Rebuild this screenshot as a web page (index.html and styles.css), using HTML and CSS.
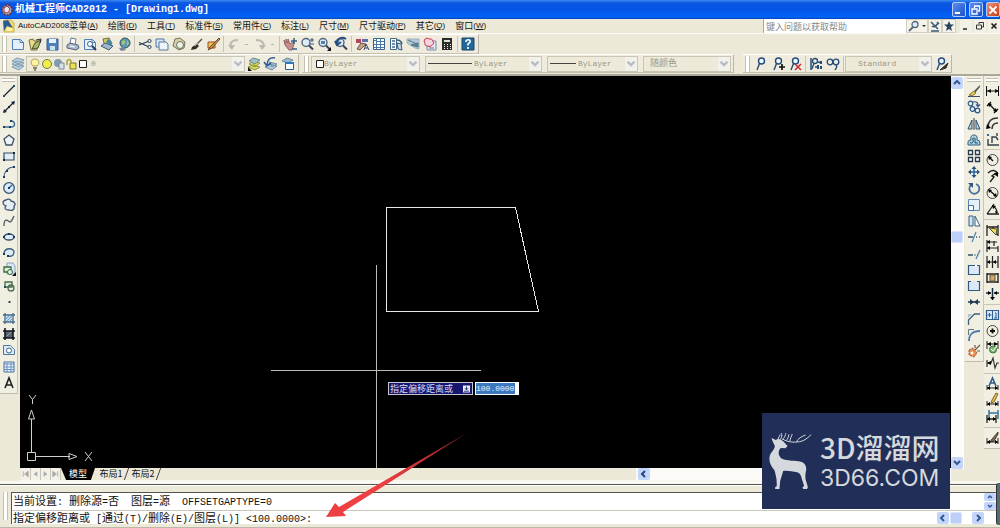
FILE: index.html
```html
<!DOCTYPE html>
<html lang="zh-CN">
<head>
<meta charset="utf-8">
<title>机械工程师CAD2012 - [Drawing1.dwg]</title>
<link rel="stylesheet" href="styles.css">
</head>
<body>
<svg class="sprite" aria-hidden="true">
  <defs>
    <linearGradient id="fade" x1="0" y1="1" x2="1" y2="0"><stop offset="0.400" stop-color="#ee3f42"/><stop offset="1" stop-color="#8c2024"/></linearGradient>
    <g id="page"><path d="M2.500 3.500h8l3 3v7h-11z" fill="#e3effd" stroke="#4f7fb4"/><path d="M10 3.500v3h3.500" fill="none" stroke="#4f7fb4"/></g>
    <g id="lens"><circle cx="7" cy="6.500" r="4" fill="#dcecf8" stroke="#56687c" stroke-width="1.400"/><path d="M10 9.500l4 4" stroke="#39465a" stroke-width="2"/></g>
    <g id="man" fill="none" stroke="#234b78" stroke-width="1.400"><circle cx="8.500" cy="5" r="3" fill="#eef5fb"/><path d="M6.500 7.500L4 14"/></g>
    <g id="ends" fill="#111"><path d="M2 8l4-2v4zM14 8l-4-2v4z"/><path d="M2 8h12M1.500 3v10M13.500 3v10" stroke="#111" fill="none"/></g>
    <g id="chev"><path d="M2 4l3 3 3-3" fill="none" stroke="#b9bdc4" stroke-width="2"/></g>
  </defs>
  <symbol id="new" viewBox="0 0 16 16"><use href="#page"/></symbol>
  <symbol id="open" viewBox="0 0 16 16"><path d="M2 4l4-1 1 2h5l-2 9H4z" fill="#e9d98b" stroke="#77713d"/><path d="M5 13l3-6 6-3-3 8z" fill="#aeb869" stroke="#455238"/><path d="M9 4l5-1-1 4" fill="none" stroke="#333"/></symbol>
  <symbol id="save" viewBox="0 0 16 16"><path d="M3 3h11v11H3z" fill="#4f81ba" stroke="#365f93"/><path d="M5 3h7v4H5z" fill="#e9f3fc"/><path d="M6 10h5v4H6z" fill="#cfe0ef"/></symbol>
  <symbol id="plot" viewBox="0 0 16 16"><path d="M5 8l1-6 5 1-1 6" fill="#fff" stroke="#667c98"/><path d="M2 9l3-2 8 2 1 3-3 2-9-2z" fill="#a8b7cb" stroke="#52657f"/><path d="M5 10l5 1" stroke="#fff"/></symbol>
  <symbol id="preview" viewBox="0 0 16 16"><use href="#page"/><circle cx="8" cy="8" r="2.500" fill="#fff" stroke="#39648c"/><path d="M10 10l4 4" stroke="#24415f" stroke-width="2"/></symbol>
  <symbol id="publish" viewBox="0 0 16 16"><path d="M4 3l6-1 3 6-7 3z" fill="#e5ca59" stroke="#686b4c"/><path d="M2 10l4-3 8 3-4 4z" fill="#9eb7cf" stroke="#3f5978"/><path d="M9 3l4 3-2 3-4-3z" fill="#4386aa"/></symbol>
  <symbol id="globe" viewBox="0 0 16 16"><circle cx="9" cy="7" r="5" fill="#5c9aad" stroke="#31536c"/><path d="M6 5c2-2 4 0 3 2s-2 2-3 1zM11 4l2 3-2 3" fill="#a8c47e"/><path d="M3 12l5-1 2 3-5 1z" fill="#70879b"/></symbol>
  <symbol id="cut" viewBox="0 0 16 16"><path d="M2 6.500l9 4M2 9l9-3.500" stroke="#28445f" stroke-width="1.300"/><circle cx="12.500" cy="5" r="1.600" fill="none" stroke="#28445f"/><circle cx="12.500" cy="11" r="1.600" fill="none" stroke="#28445f"/></symbol>
  <symbol id="copy" viewBox="0 0 16 16"><path d="M2 3h8v8H2z" fill="#d7e7f8" stroke="#5277a1"/><path d="M5 6h7l2 2v6H5z" fill="#eef5fd" stroke="#5277a1"/></symbol>
  <symbol id="paste" viewBox="0 0 16 16"><path d="M4 3l5-1 5 4-1 6-5 2-6-4z" fill="#d5cfae" stroke="#777250"/><circle cx="9" cy="9" r="3.500" fill="#edf3e6" stroke="#68735f"/></symbol>
  <symbol id="brush" viewBox="0 0 16 16"><path d="M14 3L8 9" stroke="#55524a" stroke-width="1.500"/><path d="M9 8l-5 3-1 3 5-1 3-3z" fill="#33312b"/><path d="M7 10l3-3" stroke="#c3a56d"/></symbol>
  <symbol id="block" viewBox="0 0 16 16"><path d="M3 6h7v6H3z" fill="#e4c64b" stroke="#a2482d"/><path d="M14 2L5 11l-2 3 4-2 8-9z" fill="#d7984e" stroke="#66442d"/></symbol>
  <symbol id="undo" viewBox="0 0 16 16"><path d="M5 12C3 7 6 4 12 4" fill="none" stroke="#bcbaae" stroke-width="2"/><path d="M2 9l4 5 3-5z" fill="#bcbaae"/></symbol>
  <symbol id="redo" viewBox="0 0 16 16"><path d="M11 12c2-5-1-8-7-8" fill="none" stroke="#bcbaae" stroke-width="2"/><path d="M14 9l-4 5-3-5z" fill="#bcbaae"/></symbol>
  <symbol id="pan" viewBox="0 0 16 16"><path d="M2 4l2 3 0-4 2 4V3l2 5 3-2 1 2-2 6H7L3 9z" fill="#c78f8a" stroke="#8d646b"/><path d="M12 2v6M9 5h6M10 13h5" stroke="#365d85" stroke-width="1.500"/></symbol>
  <symbol id="zoom" viewBox="0 0 16 16"><use href="#lens"/><path d="M11 4h4M13 2v4M11 8h4" stroke="#355981"/></symbol>
  <symbol id="zoomw" viewBox="0 0 16 16"><use href="#lens"/><path d="M5 5h4v3H5z" fill="#5380ac"/><path d="M15 11v4h-4z" fill="#111"/></symbol>
  <symbol id="zoomp" viewBox="0 0 16 16"><use href="#lens"/><path d="M13 3C8 0 5 3 4 7M2 5l2 4 4-3" fill="none" stroke="#244f80" stroke-width="2"/></symbol>
  <symbol id="props" viewBox="0 0 16 16"><path d="M2 3h5v4H2z" fill="#b4465d"/><path d="M8 3h6v3H8z" fill="#5b6eac"/><path d="M3 13l4-6 5 1-6 6z" fill="#c5a079" stroke="#6e5563"/><path d="M10 14l2-6 3 6M11 12h3" fill="none" stroke="#344466"/></symbol>
  <symbol id="center" viewBox="0 0 16 16"><path d="M2.500 2.500h11v11h-11z" fill="#fff" stroke="#39628d"/><path d="M5.500 2v12M9.500 2v12M10 5.500h3M10 8.500h3M10 11.500h3M6 5.500h3M6 8.500h3M6 11.500h3M3 4.500h2M3 8.500h2M3 11.500h2" stroke="#4777a5"/></symbol>
  <symbol id="palette" viewBox="0 0 16 16"><path d="M2.500 2.500h6v11h-6z" fill="#fff" stroke="#41698c"/><path d="M4 5h3M4 8h3M4 11h3" stroke="#41698c" stroke-width="1.500"/><path d="M9 4q4 0 5 4" fill="none" stroke="#375879" stroke-width="1.500"/><path d="M9 7l4 1 1 6-4-1z" fill="#c5d6e5" stroke="#375879"/></symbol>
  <symbol id="sheet" viewBox="0 0 16 16"><path d="M2 3h12v10l-4-1-8-5z" fill="#b4c9d9" stroke="#9bb1bd"/><path d="M3 4l9 4M6 9l7-2v4z" fill="#5b8a84" stroke="#57788a"/></symbol>
  <symbol id="markup" viewBox="0 0 16 16"><path d="M5 5h9v9H5z" fill="#e2e6f0" stroke="#7b89aa"/><path d="M3 3q2-2 4 0 3-1 4 2 2 3-1 4-2 3-4 1-4 0-3-3-2-2 0-4z" fill="#f6d5dc" stroke="#cc3658"/><path d="M7 12h5" stroke="#777"/></symbol>
  <symbol id="calc" viewBox="0 0 16 16"><path d="M3 2h10v12H3z" fill="#2c2b28"/><path d="M5 4h6v2H5z" fill="#dce7d6"/><path d="M5 8.500h1M8 8.500h1M11 8.500h1M5 10.500h1M8 10.500h1M11 10.500h1M5 12.500h1M8 12.500h1M11 12.500h1" stroke="#eee"/></symbol>
  <symbol id="help" viewBox="0 0 16 16"><path d="M2 2h12v12H2z" fill="#21689c" stroke="#164569"/><path d="M6 6c0-3 5-3 4 0L8 8v1.500M8 11v2" fill="none" stroke="#fff" stroke-width="1.700"/></symbol>
  <symbol id="layers" viewBox="0 0 16 16"><path d="M2 11l5-3 7 2-5 4zM2 8l5-3 7 2-5 4zM2 5l5-3 7 2-5 4z" fill="#bcd0df" stroke="#7f9bae"/></symbol>
  <symbol id="bulb" viewBox="0 0 12 14"><path d="M4 9C0 5 3 2 6 2s6 3 2 7z" fill="#fff4a0" stroke="#aaa057"/><path d="M4 11h4M5 13h2" stroke="#686653" stroke-width="1.500"/></symbol>
  <symbol id="sun" viewBox="0 0 12 14"><circle cx="6" cy="7" r="4.500" fill="#f0ee4e" stroke="#777a3e"/></symbol>
  <symbol id="vp" viewBox="0 0 12 14"><circle cx="5" cy="6" r="4" fill="#7e9cad"/><path d="M6 6h5v6H6z" fill="#d9e3e7" stroke="#758e9e"/></symbol>
  <symbol id="lock" viewBox="0 0 12 14"><path d="M5 6h6v6H5z" fill="#ece24c" stroke="#77763a"/><path d="M2 8V4q2-3 4 0v3" fill="none" stroke="#a89f3e" stroke-width="1.500"/></symbol>
  <symbol id="swatch" viewBox="0 0 12 14"><path d="M2.500 3.500h7v7h-7z" fill="#fff" stroke="#222"/></symbol>
  <symbol id="laymgr" viewBox="0 0 16 16"><path d="M2 11l5-2 7 2-5 3zM3 8l4-3 7 2-5 4z" fill="#d7d95a" stroke="#8e953f"/><path d="M3 5l4-3 7 2-5 4z" fill="#a3c0c8" stroke="#6d8b99"/><path d="M2 11v4h4z" fill="#111"/></symbol>
  <symbol id="layprev" viewBox="0 0 16 16"><path d="M2 11l4-3 8 2-5 4zM6 6l8 2-5 3z" fill="#b1c9dc" stroke="#6f8ca1"/><path d="M12 2C7 1 4 4 4 9M1 6l3 4 4-3" fill="none" stroke="#315d96" stroke-width="1.600"/></symbol>
  <symbol id="laystate" viewBox="0 0 16 16"><path d="M2 5l5-3 6 2-5 3z" fill="#9eb9ce" stroke="#6f8ca1"/><path d="M5.500 6.500h8v7h-8z" fill="#f7fbff" stroke="#2d5e91"/><path d="M5 7h9" stroke="#2d77bb" stroke-width="2"/></symbol>
  <symbol id="an1" viewBox="0 0 16 16"><use href="#man"/></symbol>
  <symbol id="an2" viewBox="0 0 16 16"><use href="#man"/><path d="M9 11h6M12 8v6" stroke="#111" stroke-width="1.700"/></symbol>
  <symbol id="an3" viewBox="0 0 16 16"><use href="#man"/><path d="M8 8l6 6M14 8l-6 6" stroke="#c92f35" stroke-width="1.600"/></symbol>
  <symbol id="an4" viewBox="0 0 16 16"><path d="M3 2v12" stroke="#234b78" stroke-width="1.500"/><circle cx="7" cy="5" r="2.500" fill="none" stroke="#234b78" stroke-width="1.300"/><path d="M6 7l-2 6M7 11h3M10 6l4 1" stroke="#234b78" stroke-width="1.300" fill="none"/><path d="M9 9h2v4H9zM12 5h2v3h-2zM12 10h2v3h-2z" fill="#234b78"/></symbol>
  <symbol id="an5" viewBox="0 0 16 16"><g fill="none" stroke="#234b78" stroke-width="1.300"><circle cx="5" cy="6" r="2.800"/><circle cx="11" cy="6" r="2.800"/><path d="M11 9c2 2 0 3-1 5"/></g></symbol>
  <symbol id="an6" viewBox="0 0 16 16"><use href="#man"/><path d="M15 7l-8 7 6-2z" fill="#302f2b" stroke="#302f2b"/></symbol>

  <symbol id="line" viewBox="0 0 16 16"><path d="M3 13L13 3" stroke="#222" stroke-width="1.200"/><path d="M2 12h2v2H2zM12 2h2v2h-2z" fill="#234b78"/></symbol>
  <symbol id="xline" viewBox="0 0 16 16"><path d="M3 13L13 3" stroke="#222" stroke-width="1.200"/><path d="M2 14l1-4 3 3zM14 2l-1 4-3-3zM7 7h2v2H7z" fill="#182c45"/></symbol>
  <symbol id="pline" viewBox="0 0 16 16"><path d="M3 11h8c4-1 3-6-1-6" fill="none" stroke="#427099" stroke-width="1.400"/><path d="M2 10h2v2H2zM8 10h2v2H8zM9 4h2v2H9z" fill="#183b60"/></symbol>
  <symbol id="poly" viewBox="0 0 16 16"><path d="M8 3l5 4-2 6H5L3 7z" fill="#eaf2fa" stroke="#3e5264" stroke-width="1.300"/></symbol>
  <symbol id="rect" viewBox="0 0 16 16"><path d="M3 5h10v7H3z" fill="#e2edf6" stroke="#334b60" stroke-width="1.200"/><path d="M2 11h2v2H2zM12 4h2v2h-2z" fill="#12283f"/></symbol>
  <symbol id="arc" viewBox="0 0 16 16"><path d="M3 13c0-5 4-10 10-10" fill="none" stroke="#44637d" stroke-width="1.200"/><path d="M2 12h2v2H2zM5 6h2v2H5zM12 2h2v2h-2z" fill="#183b60"/></symbol>
  <symbol id="circle" viewBox="0 0 16 16"><circle cx="8" cy="8" r="5.300" fill="#dbeafa" stroke="#35566e" stroke-width="1.300"/><path d="M8 8l3-3" stroke="#2869a3" stroke-width="1.500"/><path d="M7 7h2v2H7z" fill="#183b60"/></symbol>
  <symbol id="cloud" viewBox="0 0 16 16"><path d="M5 3c3-2 5 0 5 1 4 0 5 4 3 5 1 4-2 5-5 4-4 0-5-2-3-4-4-2-4-5 0-6z" fill="#e6edf4" stroke="#40576c" stroke-width="1.300"/></symbol>
  <symbol id="spline" viewBox="0 0 16 16"><path d="M3 13C3 5 6 7 8 8.500S11 7 13 3" fill="none" stroke="#4e5b62" stroke-width="1.300"/></symbol>
  <symbol id="ellipse" viewBox="0 0 16 16"><ellipse cx="8" cy="8" rx="5" ry="3" fill="#e0ecf7" stroke="#314c6a" stroke-width="1.300"/><path d="M2 7h2v2H2zM12 7h2v2h-2zM7 4h2v2H7z" fill="#183b60"/></symbol>
  <symbol id="earc" viewBox="0 0 16 16"><path d="M3 8c1-6 10-5 10-1 0 3-2 5-6 4" fill="#dbe9f5" stroke="#395b7b" stroke-width="1.300"/><path d="M2 8h2v2H2zM6 10h2v2H6z" fill="#203850"/></symbol>
  <symbol id="insert" viewBox="0 0 16 16"><path d="M6 2h6l2 3v8H6z" fill="#dae9f6" stroke="#8ba3bb"/><path d="M3 6h7v5H3z" fill="#e1f0dd" stroke="#39683e" stroke-width="1.300"/><circle cx="9" cy="11" r="2.500" fill="#e1f0dd" stroke="#39683e"/><path d="M15 11v4h-4z" fill="#111"/></symbol>
  <symbol id="mkblock" viewBox="0 0 16 16"><path d="M4 4h7v5H4z" fill="#e5efe1" stroke="#486b48" stroke-width="1.300"/><circle cx="10" cy="10" r="3" fill="none" stroke="#486b48" stroke-width="1.300"/><path d="M3 8h2v2H3z" fill="#234b78"/></symbol>
  <symbol id="point" viewBox="0 0 16 16"><path d="M7.500 7h2v2h-2z" fill="#24435b"/></symbol>
  <symbol id="hatch" viewBox="0 0 16 16"><path d="M4 3v11M12 3v11M2 5h12M2 12h12" stroke="#426b8d" stroke-width="1.300"/><path d="M5 6h6v5H5z" fill="#b9daf1"/><path d="M5 9l3-3M6 11l5-5M9 11l2-2" stroke="#719bc0"/></symbol>
  <symbol id="grad" viewBox="0 0 16 16"><path d="M4 5h8v7H4z" fill="#59656e"/><path d="M4 2v12M12 2v12M2 5h12M2 12h12" stroke="#111820" stroke-width="1.600"/><path d="M6 10l4-4" stroke="#9aa2a8"/></symbol>
  <symbol id="region" viewBox="0 0 16 16"><path d="M2.500 3.500h7l4 4v5h-11z" fill="#dbeafa" stroke="#54799b"/><circle cx="8" cy="8.500" r="2.500" fill="#fff" stroke="#38648c"/></symbol>
  <symbol id="table" viewBox="0 0 16 16"><path d="M3 3h10v10H3z" fill="#eff6fc" stroke="#426da0"/><path d="M3 5h10M3 8h10M3 10.500h10M6 4v9M10 4v9" stroke="#6791bd"/></symbol>
  <symbol id="text" viewBox="0 0 16 16"><path d="M4 13l4-10 4 10M5 10h6" fill="none" stroke="#202020" stroke-width="1.600"/></symbol>

  <symbol id="erase" viewBox="0 0 16 16"><path d="M14 2L8 8l1 2 5-6z" fill="#5b574b"/><path d="M8 8l-5 4 3 1 4-3z" fill="#e2c952" stroke="#907138"/><path d="M2 13.500h12" stroke="#3f4e61"/></symbol>
  <symbol id="mcopy" viewBox="0 0 16 16"><g fill="#e4eff8" stroke="#2f5680" stroke-width="1.200"><circle cx="4.500" cy="4.500" r="2.300"/><circle cx="6.500" cy="10" r="2.300"/><circle cx="11.500" cy="11.500" r="2.300"/><path d="M7 3c4-1 5 1 5 4M10 5.500l2 2 2-2" fill="none"/></g></symbol>
  <symbol id="mirror" viewBox="0 0 16 16"><path d="M6 4v9H2zM10 4v9h4z" fill="#b6d1dc" stroke="#31546b"/><path d="M8 2v12" stroke="#333"/></symbol>
  <symbol id="offset" viewBox="0 0 16 16"><path d="M2 13v-3q0-2 3-2-1-5 3-5t3 5q3 0 3 3v2z" fill="#acd1e2" stroke="#34627f"/><path d="M4 11h2q2-1 1-3t1-2 1 3 2 2h1" fill="none" stroke="#285779"/></symbol>
  <symbol id="array" viewBox="0 0 16 16"><path d="M2.500 2.500h4v4h-4zM9.500 2.500h4v4h-4zM2.500 9.500h4v4h-4zM9.500 9.500h4v4h-4z" fill="#fff" stroke="#273b4e" stroke-width="1.300"/></symbol>
  <symbol id="move" viewBox="0 0 16 16"><path d="M8 3v10M3 8h10" stroke="#2b659b" stroke-width="1.500"/><path d="M8 2L5.500 5h5zM8 14l-2.500-3h5zM2 8l3-2.500v5zM14 8l-3-2.500v5z" fill="#234f7d"/></symbol>
  <symbol id="rotate" viewBox="0 0 16 16"><path d="M5 4a5 5 0 1 0 5-1" fill="none" stroke="#44759d" stroke-width="1.800"/><path d="M2 2h5v5z" fill="#2d5680"/></symbol>
  <symbol id="scale" viewBox="0 0 16 16"><path d="M2.500 2.500h11v11h-11z" fill="#e3effa" stroke="#6289b1"/><path d="M2.500 8.500h5v5h-5z" fill="#fff" stroke="#416f9c"/></symbol>
  <symbol id="stretch" viewBox="0 0 16 16"><path d="M3 3h4v10H3z" fill="#d2e5f4" stroke="#345e83"/><path d="M9 3l5 10H9z" fill="#fff" stroke="#345e83"/></symbol>
  <symbol id="trim" viewBox="0 0 16 16"><path d="M2 8h5M10 8h1M13 8h1" stroke="#31536f" stroke-width="1.300"/><path d="M6 13l4-10" stroke="#4d82ae" stroke-width="1.200"/></symbol>
  <symbol id="extend" viewBox="0 0 16 16"><path d="M2 9h5M8.500 9h1M11 9h1" stroke="#31536f" stroke-width="1.300"/><path d="M10 13l4-9" stroke="#4d82ae" stroke-width="1.200"/></symbol>
  <symbol id="breakp" viewBox="0 0 16 16"><path d="M2.500 3.500h11v9h-11z" fill="#dce9f8" stroke="#315a80" stroke-width="1.200"/><path d="M9 3h2v2H9z" fill="#fff"/></symbol>
  <symbol id="break" viewBox="0 0 16 16"><path d="M2.500 3.500h11v9h-11z" fill="#dce9f8"/><path d="M5 3.500H2.500v9h11v-9H11" fill="none" stroke="#315a80" stroke-width="1.200"/></symbol>
  <symbol id="join" viewBox="0 0 16 16"><path d="M2 8h12" stroke="#223e57" stroke-width="1.500"/><path d="M8 8L4 5v6zM8 8l4-3v6z" fill="#203850"/></symbol>
  <symbol id="chamfer" viewBox="0 0 16 16"><path d="M2.500 14V9l6-6h5.500" fill="none" stroke="#40627f" stroke-width="1.300"/><path d="M2 7V3h4z" fill="#a4c3df"/></symbol>
  <symbol id="fillet" viewBox="0 0 16 16"><path d="M3 14C3 7 7 4 14 4" fill="none" stroke="#477dac" stroke-width="1.800"/><path d="M2.500 8V2.500H8" fill="none" stroke="#64747e"/></symbol>
  <symbol id="explode" viewBox="0 0 16 16"><path d="M3 7l4-2 4 5-3 4-5-2z" fill="#e79052" stroke="#9f4b30" stroke-dasharray="2 1"/><path d="M9 7l5-5M9 5V2M11 8h3" stroke="#6b5a4c" stroke-width="1.200"/><circle cx="6" cy="10" r="1.500" fill="#fff"/></symbol>

  <symbol id="dlin" viewBox="0 0 16 16"><use href="#ends"/></symbol>
  <symbol id="dali" viewBox="0 0 16 16"><path d="M4 5l7 7M2 7l4-4M9 14l4-4" stroke="#111" stroke-width="1.400"/><path d="M3 4l4 1-3 3zM12 13l-4-1 3-3z"/></symbol>
  <symbol id="darc" viewBox="0 0 16 16"><path d="M3 12C3 6 7 3 13 3M7 14c0-4 2-6 6-6" fill="none" stroke="#333" stroke-width="1.500"/><path d="M1 14l1-5 4 4z"/></symbol>
  <symbol id="dord" viewBox="0 0 16 16"><path d="M3 8v6h11M7 12V6h4l2 3M12 2v3" fill="none" stroke="#34404a" stroke-width="1.400"/><path d="M2 3h2v2H2z" fill="#2969a3"/></symbol>
  <symbol id="drad" viewBox="0 0 16 16"><circle cx="7.500" cy="8" r="5.500" fill="none" stroke="#444"/><path d="M4 5l4 4" stroke="#111" stroke-width="1.500"/><path d="M3 4l4 1-3 3z"/></symbol>
  <symbol id="djog" viewBox="0 0 16 16"><path d="M3 5c4-4 8-3 10 1M5 14l4-5-2-1 4-3" fill="none" stroke="#222" stroke-width="1.400"/><path d="M13 4v5L9 6z"/></symbol>
  <symbol id="ddia" viewBox="0 0 16 16"><circle cx="7.500" cy="8" r="5.500" fill="none" stroke="#444"/><path d="M4 5l7 6" stroke="#111" stroke-width="1.400"/><path d="M3 4l4 1-3 3zM12 12l-4-1 3-3z"/></symbol>
  <symbol id="dang" viewBox="0 0 16 16"><path d="M2 13h12M2 13L9 3M8 5c3 2 4 4 4 7" fill="none" stroke="#222" stroke-width="1.300"/><path d="M7 4l4 1-3 3zM10 10l3 1-2 2z"/></symbol>
  <symbol id="dquick" viewBox="0 0 16 16"><path d="M2 3v11M13 3v11M2 5h11M7 5l5 8" stroke="#222" stroke-width="1.300"/><path d="M4 6l8 1-1 6z" fill="#f0dd55" stroke="#55512c"/></symbol>
  <symbol id="dbase" viewBox="0 0 16 16"><path d="M2 2v12M2 4h10M2 10h11M9 3v5M13 8v6" stroke="#222" stroke-width="1.200"/><path d="M2 4l3-2v4zM2 10l3-2v4z"/></symbol>
  <symbol id="dcont" viewBox="0 0 16 16"><path d="M2 2v12M7.500 2v12M13 2v12M2 8h11" stroke="#222" stroke-width="1.200"/><path d="M2 8l3-2v4zM8 8l3-2v4z"/></symbol>
  <symbol id="dspace" viewBox="0 0 16 16"><path d="M2 3v10M13 3v10M2 4h11M2 12h11" stroke="#222" stroke-width="1.400"/><path d="M5 5h5v6H5z" fill="#cda96b" stroke="#665536"/></symbol>
  <symbol id="dbreak" viewBox="0 0 16 16"><path d="M7.500 2v12M1 7h5M9 7h5" stroke="#172c40" stroke-width="1.500"/><path d="M5 11l2.500 3 2.500-3zM3 5v4l3-2zM12 5v4L9 7z"/></symbol>
  <symbol id="dtol" viewBox="0 0 16 16"><path d="M1.500 3.500h12v9h-12z" fill="#d3e6fa" stroke="#335f8e" stroke-width="1.200"/><path d="M7.500 4v9M2.500 8h4M4.500 6v4M10 6h1v5M9 11h3" fill="none" stroke="#335f8e"/></symbol>
  <symbol id="dcen" viewBox="0 0 16 16"><circle cx="7.500" cy="8" r="5.500" fill="none" stroke="#444"/><path d="M5 8h5M7.500 5.500v5" stroke="#111" stroke-width="1.800"/></symbol>
  <symbol id="dinsp" viewBox="0 0 16 16"><path d="M2 2v8M13 2v8M2 5h11" stroke="#222"/><path d="M2 5l4-2v4zM13 5L9 3v4z"/><circle cx="8" cy="10.500" r="3.500" fill="#7fb576" stroke="#3a753b"/><path d="M6 10l2 2 3-4" fill="none" stroke="#fff"/></symbol>
  <symbol id="djogl" viewBox="0 0 16 16"><path d="M2 5v7M2 8h4l2-5 2 10 2-5h2" fill="none" stroke="#333" stroke-width="1.200"/><path d="M2 8l4-2v4z"/></symbol>
  <symbol id="dedit" viewBox="0 0 16 16"><path d="M4 10l3.500-8L11 10M5 7h5" fill="none" stroke="#2c5d87" stroke-width="1.600"/><path d="M2 9v5M13 9v5M2 12h11" stroke="#222"/><path d="M2 12l3-2v4zM13 12l-3-2v4z"/></symbol>
  <symbol id="dtedit" viewBox="0 0 16 16"><path d="M11 1l2 1-4 8-3 1 1-3z" fill="#e5bd45" stroke="#806536"/><path d="M2 9v5M13 9v5M2 12h11" stroke="#222"/><path d="M2 12l3-2v4zM13 12l-3-2v4z"/></symbol>
  <symbol id="dupd" viewBox="0 0 16 16"><path d="M4 1v9M13 1v9M4 4h9" stroke="#36749b" stroke-width="1.500"/><path d="M2 6v8M11 6v8M2 10h9" stroke="#222" stroke-width="1.300"/><path d="M2 10l3-2v4zM11 10L8 8v4z"/></symbol>
  <symbol id="dstyle" viewBox="0 0 16 16"><path d="M13 2L7 9l-2 3 4-1 4-7z" fill="#7b654b" stroke="#4c4234"/><path d="M2 8v6M13 8v6M2 12h11" stroke="#222"/><path d="M2 12l3-2v4zM13 12l-3-2v4z"/></symbol>
</svg>

<header class="titlebar">
  <svg class="app-logo" viewBox="0 0 14 14"><circle cx="7" cy="7" r="5" fill="#b9b4bd" stroke="#603b4b" stroke-width="2" stroke-dasharray="2 1"/><path d="M4 5l3-2 3 3-2 4-4-1z" fill="#e6e7ed" stroke="#97405a"/></svg>
  <h1>机械工程师CAD2012 - [Drawing1.dwg]</h1>
  <div class="winbtns">
    <button aria-label="最小化"><svg viewBox="0 0 14 14"><path d="M3 10h5" stroke="#fff" stroke-width="2"/></svg></button>
    <button aria-label="还原"><svg viewBox="0 0 14 14"><path d="M5.500 5V3h5v5H9M3 6h5v5H3z" fill="none" stroke="#fff" stroke-width="1.300"/></svg></button>
    <button class="close" aria-label="关闭"><svg viewBox="0 0 14 14"><path d="M3.500 3.500l7 7M10.500 3.500l-7 7" stroke="#fff" stroke-width="1.800"/></svg></button>
  </div>
</header>

<nav class="menubar">
  <svg class="doc-logo" viewBox="0 0 14 14"><path d="M3 1h7l3 3v9H3z" fill="#f3dc66" stroke="#c9b64e"/><path d="M2 2l5-1 5 8-6-2-3 5z" fill="#2b5d94"/><path d="M6 9h5v3H6z" fill="#fff5b6"/></svg>
  <ul>
    <li><button><span>AutoCAD2008</span>菜单<span>(<u>A</u>)</span></button></li>
    <li><button>绘图<span>(<u>D</u>)</span></button></li>
    <li><button>工具<span>(<u>T</u>)</span></button></li>
    <li><button>标准件<span>(<u>S</u>)</span></button></li>
    <li><button>常用件<span>(<u>C</u>)</span></button></li>
    <li><button>标注<span>(<u>L</u>)</span></button></li>
    <li><button>尺寸<span>(<u>M</u>)</span></button></li>
    <li><button>尺寸驱动<span>(<u>P</u>)</span></button></li>
    <li><button>其它<span>(<u>Q</u>)</span></button></li>
    <li><button>窗口<span>(<u>W</u>)</span></button></li>
  </ul>
  <div class="infocenter">
    <input type="search" aria-label="帮助搜索" placeholder="键入问题以获取帮助">
    <button class="find" aria-label="搜索"><svg viewBox="0 0 20 12"><circle cx="8" cy="4.500" r="3" fill="#e1eefa" stroke="#52667c" stroke-width="1.300"/><path d="M6 7l-4 4" stroke="#52667c" stroke-width="1.800"/><path d="M15 5h4l-2 2z" fill="#333"/></svg></button>
    <button aria-label="通讯中心"><svg viewBox="0 0 12 12"><path d="M2 2l7 7M3 6c2 2 4 0 6-3M2 11h8M8 2l2 2" fill="none" stroke="#3d5876" stroke-width="1.600"/></svg></button>
    <button aria-label="收藏夹"><svg viewBox="0 0 12 12"><path d="M6 1l1.500 3.500H11L8 7l1 4-3-2-3 2 1-4-3-2.500h3.500z" fill="#29435f"/></svg></button>
  </div>
  <div class="docbtns">
    <button aria-label="最小化文档"><svg viewBox="0 0 12 12"><path d="M3 9h4" stroke="#222" stroke-width="1.500"/></svg></button>
    <button aria-label="还原文档"><svg viewBox="0 0 12 12"><path d="M5 4V2.500h4.500V7H8M2.500 5h5v4h-5z" fill="none" stroke="#333"/></svg></button>
    <button aria-label="关闭文档"><svg viewBox="0 0 12 12"><path d="M3.500 3.500l5 5M8.500 3.500l-5 5" stroke="#222" stroke-width="1.700"/></svg></button>
  </div>
</nav>

<div class="toolrow">
  <div class="toolbar" role="toolbar" aria-label="标准">
    <i class="grip"></i>
    <button aria-label="新建"><svg><use href="#new"/></svg></button>
    <button aria-label="打开"><svg><use href="#open"/></svg></button>
    <button aria-label="保存"><svg><use href="#save"/></svg></button>
    <i class="sep"></i>
    <button aria-label="打印"><svg><use href="#plot"/></svg></button>
    <button aria-label="打印预览"><svg><use href="#preview"/></svg></button>
    <button aria-label="发布"><svg><use href="#publish"/></svg></button>
    <button aria-label="三维 DWF"><svg><use href="#globe"/></svg></button>
    <i class="sep"></i>
    <button aria-label="剪切"><svg><use href="#cut"/></svg></button>
    <button aria-label="复制"><svg><use href="#copy"/></svg></button>
    <button aria-label="粘贴"><svg><use href="#paste"/></svg></button>
    <button aria-label="特性匹配"><svg><use href="#brush"/></svg></button>
    <button aria-label="块编辑器"><svg><use href="#block"/></svg></button>
    <i class="sep"></i>
    <button disabled aria-label="放弃"><svg><use href="#undo"/></svg></button><i class="dash"></i>
    <button disabled aria-label="重做"><svg><use href="#redo"/></svg></button><i class="dash"></i>
    <i class="sep"></i>
    <button aria-label="平移"><svg><use href="#pan"/></svg></button>
    <button aria-label="缩放"><svg><use href="#zoom"/></svg></button>
    <button aria-label="窗口缩放"><svg><use href="#zoomw"/></svg></button>
    <button aria-label="缩放上一个"><svg><use href="#zoomp"/></svg></button>
    <i class="sep"></i>
    <button aria-label="特性"><svg><use href="#props"/></svg></button>
    <button aria-label="设计中心"><svg><use href="#center"/></svg></button>
    <button aria-label="工具选项板"><svg><use href="#palette"/></svg></button>
    <button aria-label="图纸集"><svg><use href="#sheet"/></svg></button>
    <button aria-label="标记集"><svg><use href="#markup"/></svg></button>
    <button aria-label="计算器"><svg><use href="#calc"/></svg></button>
    <i class="sep"></i>
    <button aria-label="帮助"><svg><use href="#help"/></svg></button>
  </div>
</div>

<div class="toolrow second">
  <div class="toolbar" role="toolbar" aria-label="图层">
    <i class="grip"></i>
    <button aria-label="图层特性"><svg><use href="#layers"/></svg></button>
    <div class="combo layer">
      <svg class="mark"><use href="#bulb"/></svg><svg class="mark"><use href="#sun"/></svg><svg class="mark"><use href="#vp"/></svg><svg class="mark"><use href="#lock"/></svg><svg class="mark"><use href="#swatch"/></svg>
      <select disabled aria-label="图层"><option>0</option></select>
      <svg class="arrow" viewBox="0 0 10 12"><use href="#chev"/></svg>
    </div>
    <button aria-label="置为当前"><svg><use href="#laymgr"/></svg></button>
    <button aria-label="上一个图层"><svg><use href="#layprev"/></svg></button>
    <button aria-label="图层状态"><svg><use href="#laystate"/></svg></button>
  </div>
  <div class="toolbar" role="toolbar" aria-label="对象特性">
    <i class="grip"></i>
    <div class="combo color">
      <svg class="mark"><use href="#swatch"/></svg>
      <select disabled aria-label="颜色"><option>ByLayer</option></select>
      <svg class="arrow" viewBox="0 0 10 12"><use href="#chev"/></svg>
    </div>
    <div class="combo ltype">
      <i class="rule"></i>
      <select disabled aria-label="线型"><option>ByLayer</option></select>
      <svg class="arrow" viewBox="0 0 10 12"><use href="#chev"/></svg>
    </div>
    <div class="combo lweight">
      <i class="rule short"></i>
      <select disabled aria-label="线宽"><option>ByLayer</option></select>
      <svg class="arrow" viewBox="0 0 10 12"><use href="#chev"/></svg>
    </div>
    <div class="combo pstyle">
      <select disabled aria-label="打印样式"><option>随颜色</option></select>
      <svg class="arrow" viewBox="0 0 10 12"><use href="#chev"/></svg>
    </div>
  </div>
  <div class="toolbar anno" role="toolbar" aria-label="标注样式">
    <i class="grip"></i>
    <button aria-label="注释比例"><svg><use href="#an1"/></svg></button>
    <button aria-label="添加比例"><svg><use href="#an2"/></svg></button>
    <button aria-label="删除比例"><svg><use href="#an3"/></svg></button>
    <i class="sep"></i>
    <button aria-label="比例列表"><svg><use href="#an4"/></svg></button>
    <button aria-label="同步比例"><svg><use href="#an5"/></svg></button>
    <i class="sep"></i>
    <div class="combo std">
      <select disabled aria-label="样式"><option>Standard</option></select>
      <svg class="arrow" viewBox="0 0 10 12"><use href="#chev"/></svg>
    </div>
    <button aria-label="编辑样式"><svg><use href="#an6"/></svg></button>
  </div>
</div>

<main class="workspace">
  <div class="palette draw" role="toolbar" aria-label="绘图">
    <i class="hgrip"></i>
    <button aria-label="直线"><svg><use href="#line"/></svg></button>
    <button aria-label="构造线"><svg><use href="#xline"/></svg></button>
    <button aria-label="多段线"><svg><use href="#pline"/></svg></button>
    <button aria-label="多边形"><svg><use href="#poly"/></svg></button>
    <button aria-label="矩形"><svg><use href="#rect"/></svg></button>
    <button aria-label="圆弧"><svg><use href="#arc"/></svg></button>
    <button aria-label="圆"><svg><use href="#circle"/></svg></button>
    <button aria-label="修订云线"><svg><use href="#cloud"/></svg></button>
    <button aria-label="样条曲线"><svg><use href="#spline"/></svg></button>
    <button aria-label="椭圆"><svg><use href="#ellipse"/></svg></button>
    <button aria-label="椭圆弧"><svg><use href="#earc"/></svg></button>
    <button aria-label="插入块"><svg><use href="#insert"/></svg></button>
    <button aria-label="创建块"><svg><use href="#mkblock"/></svg></button>
    <button aria-label="点"><svg><use href="#point"/></svg></button>
    <button aria-label="图案填充"><svg><use href="#hatch"/></svg></button>
    <button aria-label="渐变色"><svg><use href="#grad"/></svg></button>
    <button aria-label="面域"><svg><use href="#region"/></svg></button>
    <button aria-label="表格"><svg><use href="#table"/></svg></button>
    <button aria-label="多行文字"><svg><use href="#text"/></svg></button>
  </div>

  <section class="document">
    <div class="canvas">
      <svg class="drawing" aria-label="图形">
        <g fill="none" stroke="#e8e8e8" shape-rendering="crispEdges">
          <path d="M366.500 131.500H495.500L518.500 235.500H366.500Z"/>
          <path d="M356.500 189V392M251 294.500H461" stroke="#bdbdb4"/>
        </g>
        <g fill="none" stroke="#d0d0d0">
          <path d="M7.500 376.500h8v8h-8zM11.500 376V343M16 380.500H50"/>
          <path d="M11.500 334l-3 9h6zM57 380.500l-8-3v6z"/>
          <path d="M9 319l3.500 4.500L16 319M12.500 323.500V328M65 376l7 9M72 376l-7 9"/>
        </g>
      </svg>
      <div class="dyninput">
        <label for="offset-distance">指定偏移距离或<svg viewBox="0 0 8 8"><path d="M0 0h8v8H0z" fill="#eef"/><path d="M4 1v4M2 3l2 2 2-2M1 6.500h6" fill="none" stroke="#112266"/></svg></label>
        <div class="field"><input id="offset-distance" type="text" value="100.0000"></div>
      </div>
    </div>
    <div class="layoutbar">
      <div class="tabnav">
        <button aria-label="第一个"><svg viewBox="0 0 10 10"><path d="M2.500 2v6M8 2L4 5l4 3z" fill="#aaa" stroke="#aaa"/></svg></button>
        <button aria-label="上一个"><svg viewBox="0 0 10 10"><path d="M7 2L3 5l4 3z" fill="#aaa"/></svg></button>
        <button aria-label="下一个"><svg viewBox="0 0 10 10"><path d="M3 2l4 3-4 3z" fill="#aaa"/></svg></button>
        <button aria-label="最后一个"><svg viewBox="0 0 10 10"><path d="M7.500 2v6M2 2l4 3-4 3z" fill="#aaa" stroke="#aaa"/></svg></button>
      </div>
      <button class="tab active">模型</button>
      <button class="tab">布局1</button>
      <button class="tab">布局2</button>
      <div class="hscroll"><button class="sb" aria-label="向左滚动"><svg viewBox="0 0 12 12"><path d="M7 3L4 6l3 3" fill="none" stroke="#23447d" stroke-width="2"/></svg></button></div>
    </div>
  </section>

  <div class="vscroll">
    <button class="sb" aria-label="向上滚动"><svg viewBox="0 0 12 12"><path d="M3 7l3-3 3 3" fill="none" stroke="#34588f" stroke-width="2"/></svg></button>
    <i class="thumb"></i>
    <button class="sb" aria-label="向下滚动"><svg viewBox="0 0 12 12"><path d="M3 4l3 3 3-3" fill="none" stroke="#34588f" stroke-width="2"/></svg></button>
  </div>

  <div class="palette modify" role="toolbar" aria-label="修改">
    <i class="hgrip"></i>
    <button aria-label="删除"><svg><use href="#erase"/></svg></button>
    <button aria-label="复制对象"><svg><use href="#mcopy"/></svg></button>
    <button aria-label="镜像"><svg><use href="#mirror"/></svg></button>
    <button aria-label="偏移"><svg><use href="#offset"/></svg></button>
    <button aria-label="阵列"><svg><use href="#array"/></svg></button>
    <button aria-label="移动"><svg><use href="#move"/></svg></button>
    <button aria-label="旋转"><svg><use href="#rotate"/></svg></button>
    <button aria-label="比例缩放"><svg><use href="#scale"/></svg></button>
    <button aria-label="拉伸"><svg><use href="#stretch"/></svg></button>
    <button aria-label="修剪"><svg><use href="#trim"/></svg></button>
    <button aria-label="延伸"><svg><use href="#extend"/></svg></button>
    <button aria-label="打断于点"><svg><use href="#breakp"/></svg></button>
    <button aria-label="打断"><svg><use href="#break"/></svg></button>
    <button aria-label="合并"><svg><use href="#join"/></svg></button>
    <button aria-label="倒角"><svg><use href="#chamfer"/></svg></button>
    <button aria-label="圆角"><svg><use href="#fillet"/></svg></button>
    <button aria-label="分解"><svg><use href="#explode"/></svg></button>
  </div>

  <div class="palette dims" role="toolbar" aria-label="标注">
    <i class="hgrip"></i>
    <button aria-label="线性"><svg><use href="#dlin"/></svg></button>
    <button aria-label="对齐"><svg><use href="#dali"/></svg></button>
    <button aria-label="弧长"><svg><use href="#darc"/></svg></button>
    <button aria-label="坐标"><svg><use href="#dord"/></svg></button>
    <i class="hsep"></i>
    <button aria-label="半径"><svg><use href="#drad"/></svg></button>
    <button aria-label="折弯"><svg><use href="#djog"/></svg></button>
    <button aria-label="直径"><svg><use href="#ddia"/></svg></button>
    <button aria-label="角度"><svg><use href="#dang"/></svg></button>
    <i class="hsep"></i>
    <button aria-label="快速标注"><svg><use href="#dquick"/></svg></button>
    <button aria-label="基线"><svg><use href="#dbase"/></svg></button>
    <button aria-label="连续"><svg><use href="#dcont"/></svg></button>
    <button aria-label="标注间距"><svg><use href="#dspace"/></svg></button>
    <button aria-label="折断标注"><svg><use href="#dbreak"/></svg></button>
    <i class="hsep"></i>
    <button aria-label="公差"><svg><use href="#dtol"/></svg></button>
    <button aria-label="圆心标记"><svg><use href="#dcen"/></svg></button>
    <button aria-label="检验"><svg><use href="#dinsp"/></svg></button>
    <button aria-label="折弯线性"><svg><use href="#djogl"/></svg></button>
    <i class="hsep"></i>
    <button aria-label="编辑标注"><svg><use href="#dedit"/></svg></button>
    <button aria-label="编辑标注文字"><svg><use href="#dtedit"/></svg></button>
    <button aria-label="标注更新"><svg><use href="#dupd"/></svg></button>
    <i class="hsep"></i>
    <button aria-label="标注样式管理"><svg><use href="#dstyle"/></svg></button>
  </div>
</main>

<footer class="command">
  <i class="grip"></i>
  <div class="console">
    <div class="history">
      <p>当前设置<span>: </span>删除源<span>=</span>否<span>  </span>图层<span>=</span>源<span>  OFFSETGAPTYPE=0</span></p>
      <div class="spin">
        <button class="sb" aria-label="上一行"><svg viewBox="0 0 12 8"><path d="M4 5l2-2 2 2" fill="none" stroke="#34588f" stroke-width="1.500"/></svg></button>
        <button class="sb" aria-label="下一行"><svg viewBox="0 0 12 8"><path d="M4 3l2 2 2-2" fill="none" stroke="#34588f" stroke-width="1.500"/></svg></button>
      </div>
    </div>
    <div class="prompt">
      <label for="cmd">指定偏移距离或<span> [</span>通过<span>(T)/</span>删除<span>(E)/</span>图层<span>(L)] &lt;100.0000&gt;:</span></label>
      <input id="cmd" type="text">
      <div class="cmdscroll">
        <button class="sb" aria-label="命令行左移"><svg viewBox="0 0 12 12"><path d="M7 3L4 6l3 3" fill="none" stroke="#34588f" stroke-width="2"/></svg></button>
        <i class="thumb"></i>
        <button class="sb" aria-label="命令行右移"><svg viewBox="0 0 12 12"><path d="M5 3l3 3-3 3" fill="none" stroke="#34588f" stroke-width="2"/></svg></button>
      </div>
    </div>
  </div>
  <i class="edge"></i>
  <svg class="pointer" viewBox="0 0 148 90" aria-hidden="true"><path d="M6 85L15 71L19 75L147 1L23 80L26 84Z" fill="url(#fade)"/></svg>
</footer>

<aside class="watermark">
  <svg viewBox="80 88 140 180" aria-hidden="true">
    <path d="M93 109L106 115C112 109 122 112 128 119L141 133L135 140L121 139C112 147 112 162 124 171C140 178 165 176 181 180C194 184 198 194 197 205C195 214 194 222 195 232L202 256L200 262L188 262L186 257L191 253L184 232C182 222 178 214 170 212C156 210 140 206 128 208C126 216 122 228 119 238L117 262L104 262L104 257L109 253L108 232C106 222 104 210 101 204C90 192 84 176 88 162C92 150 101 146 103 134C102 128 96 122 93 109Z" fill="#d5d8dc"/>
    <path d="M120 114C123 106 126 100 122 94M125 114C135 106 134 100 136 94M127 112C140 122 165 124 185 118C197 114 206 104 212 99M148 118C149 109 154 103 155 97M168 120C172 111 184 104 195 100M113 114C112 106 120 104 118 99M136 117C142 112 144 106 145 98" fill="none" stroke="#d5d8dc" stroke-width="3"/>
  </svg>
  <div><strong>3D溜溜网</strong><span>3D66.COM</span></div>
</aside>
</body>
</html>
```

FILE: styles.css
```css
* { box-sizing: border-box; }

body {
  margin: 0;
  height: 100vh;
  display: flex;
  flex-direction: column;
  position: relative;
  overflow: hidden;
  background: #ece9d8;
  color: #111;
  font: 9px/12px "Liberation Mono", "Noto Sans CJK SC", monospace;
}

button, input, select { font: inherit; color: inherit; margin: 0; padding: 0; border: 0; background: none; border-radius: 0; outline: 0; }
button { display: flex; align-items: center; justify-content: center; flex: none; }
svg { display: block; flex: none; }
i { display: block; flex: none; }
.sprite { position: absolute; width: 0; height: 0; }

/* title bar */
.titlebar {
  flex: none;
  height: 19px;
  display: flex;
  align-items: center;
  background: linear-gradient(#3a8bf5 0, #0a56e0 3px, #0355e8 10px, #0263f8 17px, #0345b8 19px);
}
.app-logo { width: 14px; height: 14px; }
.titlebar h1 { margin: 0 auto 0 1px; font-size: 10px; line-height: 18px; font-weight: bold; color: #fff; }
.winbtns { display: flex; gap: 3px; }
.winbtns button { width: 14px; height: 15px; border: 1px solid #b6cdf8; border-radius: 2px; background: linear-gradient(135deg, #5a8ef0, #1d50c8); }
.winbtns .close { background: linear-gradient(135deg, #ee9175, #c93b16); }
.winbtns svg { width: 14px; height: 14px; }

/* menu bar */
.menubar { flex: none; height: 15px; display: flex; align-items: center; border-bottom: 1px solid #fbfaf4; }
.doc-logo { width: 14px; height: 14px; margin: 0 3px 0 1px; }
.menubar ul { display: flex; gap: 10px; margin: 0 auto 0 0; padding: 0; list-style: none; }
.menubar li button { font: 9px/14px "Noto Sans CJK SC", sans-serif; white-space: nowrap; }
.menubar li span { font: 8px/14px "Liberation Sans", sans-serif; }
.infocenter { display: flex; height: 14px; background: #fff; }
.infocenter input { width: 143px; border-left: 1px solid #aca899; padding-left: 2px; font: 9px/13px "Noto Sans CJK SC", sans-serif; appearance: none; }
.infocenter input::placeholder { color: #868686; opacity: 1; }
.infocenter button { width: 14px; background: #f4f2e9; border: 1px solid #d2cfc0; }
.infocenter .find { width: 22px; }
.infocenter svg { height: 12px; }
.docbtns { display: flex; margin-left: 4px; gap: 2px; }
.docbtns button { width: 12px; height: 13px; background: #f3f1e6; }
.docbtns svg { width: 12px; height: 12px; }

/* tool bars */
.toolrow { flex: none; height: 20px; display: flex; }
.toolrow.second { height: 22px; padding: 0 0 1px; border-bottom: 2px solid #aca899; }
.toolbar { display: flex; align-items: center; padding: 0 2px 0 2px; background: #efecde; border: solid #fff; border-width: 1px 0 0; border-right: 1px solid #b9b6a6; border-bottom: 1px solid #c4c1b2; }
.toolbar button { width: 17px; height: 18px; }
.toolbar button svg { width: 16px; height: 16px; }
.grip { width: 5px; height: 16px; margin-right: 2px; border: solid #c2bfae; border-width: 0 1px; background: #fff; }
.sep { width: 4px; height: 16px; background: linear-gradient(#c8c5b6, #c8c5b6) center / 1px 100% no-repeat; }
.dash { width: 9px; height: 2px; background: linear-gradient(#b9b6a9, #b9b6a9) center / 3px 1px no-repeat; }
.second .toolbar + .toolbar { margin-left: 3px; }
.second .toolbar + .anno { margin-left: 9px; }

.combo { display: flex; align-items: center; height: 16px; border: 1px solid #c9c6b6; background: #edeada; color: #aaa797; padding-left: 2px; }
.combo + .combo { margin-left: 5px; }
.combo .mark { width: 12px; height: 14px; }
.combo select { flex: 1; min-width: 0; height: 14px; appearance: none; opacity: 1; color: #9b9889; font: 8px/14px "Liberation Mono", "Noto Sans CJK SC", monospace; padding-left: 2px; }
.combo .arrow { width: 12px; height: 14px; background: #f2f1ec; }
.layer { width: 219px; }
.color { width: 109px; }
.color .mark { margin-right: -4px; }
.ltype { width: 117px; }
.lweight { width: 91px; }
.pstyle { width: 88px; }
.pstyle select { font-size: 9px; padding-left: 4px; }
.std { width: 87px; }
.std select { padding-left: 10px; }
.rule { width: 44px; height: 1px; background: #444; }
.rule.short { width: 26px; }

/* work area */
.workspace { flex: 1; min-height: 0; display: flex; align-items: stretch; }
.palette { flex: none; display: flex; flex-direction: column; align-self: flex-start; padding-bottom: 2px; background: #f1eee2; border-right: 1px solid #c8c5b5; border-bottom: 1px solid #c0bdac; }
.palette button { height: 16px; }
.palette svg { width: 16px; height: 16px; }
.hgrip { height: 4px; margin: 2px 2px 1px; border: solid #c2bfae; border-width: 1px 0; background: #fff; }
.draw { width: 18px; margin-right: 2px; min-height: 318px; justify-content: space-between; }
.modify { width: 19px; min-height: 286px; justify-content: space-between; }
.dims { width: 16px; overflow: hidden; border-right: 0; min-height: 373px; justify-content: space-between; }
.dims button { justify-content: flex-start; padding-left: 1px; }
.hsep { height: 5px; background: linear-gradient(#c8c5b6, #c8c5b6) center / 100% 1px no-repeat; }

.document { flex: 1; min-width: 0; display: flex; flex-direction: column; }
.canvas { flex: 1; min-height: 0; position: relative; background: #000; overflow: hidden; }
.drawing { width: 100%; height: 100%; }
.dyninput { position: absolute; left: 368px; top: 306px; display: flex; gap: 2px; }
.dyninput label { display: flex; align-items: center; justify-content: space-between; width: 85px; height: 13px; padding: 0 2px 0 1px; border: 1px solid #c5c5cc; background: #15166f; color: #dcdcee; font: 9px/11px "Noto Sans CJK SC", sans-serif; }
.dyninput label svg { width: 7px; height: 8px; }
.dyninput .field { width: 44px; height: 13px; padding: 1px; background: #fff; }
.dyninput input { display: block; width: 39px; height: 11px; background: #3b78bd; color: #e6f2ff; font-size: 8px; line-height: 11px; }

.layoutbar { flex: none; height: 13px; display: flex; align-items: stretch; border-bottom: 1px solid #f8f7f0; }
.tabnav { display: flex; padding-left: 1px; }
.tabnav button { width: 10px; border-right: 1px solid #c9c6b7; background: #f3f1e8; }
.tabnav svg { width: 9px; height: 10px; }
.tab { position: relative; font: 9px/12px "Noto Sans CJK SC", sans-serif; width: 32px; }
.tab.active { width: 34px; color: #fff; background: #000; clip-path: polygon(0 0, 100% 0, 88% 100%, 15% 100%); }
.tab:not(.active)::after { content: ""; position: absolute; right: 0; top: 0; height: 12px; border-right: 1px solid #444; transform: skewX(-20deg); }
.hscroll { margin-left: auto; width: 315px; padding-left: 2px; background: #fbfaf7; }

.sb { width: 12px; height: 12px; border-radius: 2px; background: #c4d5fb; }
.sb svg { width: 12px; height: 12px; }
.thumb { width: 12px; height: 12px; border-radius: 2px; background: #bccff8; border: 1px solid #d9e4fc; }
.vscroll { flex: none; width: 13px; margin-right: 1px; margin-bottom: 12px; padding-top: 1px; background: #fcfcfa; display: flex; flex-direction: column; justify-content: space-between; }
.vscroll .thumb { margin-top: -72px; }

/* command window */
.command { flex: none; position: relative; height: 47px; display: flex; padding: 11px 4px 3px 3px; background: linear-gradient(#f8f7f0 3px, #55554f 3px, #55554f 4px, #fff 4px, #fff 5px, #ece9d8 5px); border-bottom: 1px solid #bbb8a8; }
.command .grip { height: 28px; margin-right: 3px; }
.console { flex: 1; min-width: 0; border: solid #55554f; border-width: 1px 0 0 1px; background: #fff; font-family: "Noto Sans CJK SC", sans-serif; font-size: 11px; line-height: 13px; }
.console span { font-family: "Liberation Mono", monospace; font-size: 10px; white-space: pre; }
.history { height: 18px; display: flex; border-bottom: 1px solid #c9c6ba; }
.history p { flex: 1; margin: 0; padding-left: 1px; line-height: 14px; }
.spin { display: flex; flex-direction: column; gap: 1px; }
.spin .sb, .spin svg { height: 8px; }
.prompt { display: flex; height: 14px; align-items: center; }
.prompt label { padding-left: 1px; white-space: nowrap; }
.prompt input { flex: 1; min-width: 0; height: 13px; font-size: 10px; }
.cmdscroll { display: flex; width: 59px; gap: 1px; padding-right: 12px; background: #fff; }
.cmdscroll .sb:last-child { margin-left: auto; }
.edge { position: absolute; right: 0; top: 2px; width: 4px; height: 42px; border-radius: 3px 0 0 3px; background: #5b6a70; border-left: 1px solid #2d3438; }
.pointer { position: absolute; left: 320px; bottom: 5px; width: 148px; height: 90px; }

/* site badge */
.watermark { position: absolute; right: 50px; bottom: 19px; width: 188px; height: 96px; display: flex; align-items: center; gap: 6px; padding-left: 5px; background: #212f58; color: #d5d8dc; }
.watermark svg { width: 47px; height: 60px; }
.watermark div { display: flex; flex-direction: column; }
.watermark strong { font: 500 28px/34px "Noto Sans CJK SC", sans-serif; white-space: nowrap; }
.watermark span { font: 23px/28px Inter, sans-serif; white-space: nowrap; }
```
